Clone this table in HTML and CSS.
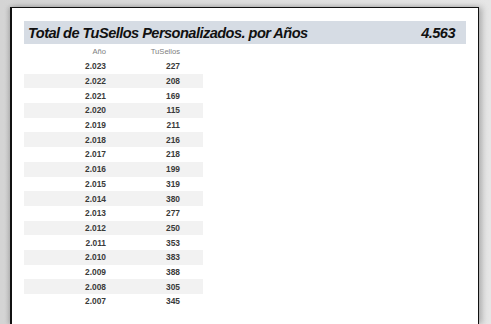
FILE: index.html
```html
<!DOCTYPE html>
<html lang="es">
<head>
    <meta charset="UTF-8">
    <title>TuSellos Personalizados por Años</title>
    <link rel="stylesheet" href="styles.css">
</head>
<body>
    <div class="hoja">
        <div class="titulo">
            <span>Total de TuSellos Personalizados. por Años</span>
            <span>4.563</span>
        </div>

        <div class="tabla">
            <div class="fila cabecera"><span>Año</span><span>TuSellos</span></div>
            <div class="fila"><span>2.023</span><span>227</span></div>
            <div class="fila"><span>2.022</span><span>208</span></div>
            <div class="fila"><span>2.021</span><span>169</span></div>
            <div class="fila"><span>2.020</span><span>115</span></div>
            <div class="fila"><span>2.019</span><span>211</span></div>
            <div class="fila"><span>2.018</span><span>216</span></div>
            <div class="fila"><span>2.017</span><span>218</span></div>
            <div class="fila"><span>2.016</span><span>199</span></div>
            <div class="fila"><span>2.015</span><span>319</span></div>
            <div class="fila"><span>2.014</span><span>380</span></div>
            <div class="fila"><span>2.013</span><span>277</span></div>
            <div class="fila"><span>2.012</span><span>250</span></div>
            <div class="fila"><span>2.011</span><span>353</span></div>
            <div class="fila"><span>2.010</span><span>383</span></div>
            <div class="fila"><span>2.009</span><span>388</span></div>
            <div class="fila"><span>2.008</span><span>305</span></div>
            <div class="fila"><span>2.007</span><span>345</span></div>
        </div>
    </div>
</body>
</html>
```

FILE: styles.css
```css
* { margin: 0; padding: 0; box-sizing: border-box; }

html, body {
    height: 100%;
    overflow: hidden;
}

body {
    font-family: 'Liberation Sans', Arial, sans-serif;
    background: linear-gradient(90deg, #d4d4d4 0%, #dedede 50%, #e6e6e6 100%);
    padding: 7px 0 0 10px;
}

/* hoja de impresión, sigue por debajo del borde */
.hoja {
    width: 469px;
    height: 100%;
    background: #fff;
    border: 1px solid #111;
    border-left-width: 2px;
    border-bottom: none;
    box-shadow: 3px 0 6px rgba(0,0,0,0.25), -2px 0 4px rgba(0,0,0,0.15);
    padding: 13px 0 0 12px;
}

.titulo {
    width: 442px;
    height: 23px;
    background: #d6dce4;
    display: flex;
    justify-content: space-between;
    align-items: center;
    padding: 1px 11px 0 4px;
    font-size: 14.6px;
    font-weight: bold;
    font-style: italic;
    color: #111;
    letter-spacing: -0.55px;
}

.tabla {
    width: 179px;
}

.fila {
    display: grid;
    grid-template-columns: 82px 74px 1fr;
    height: 14.7px;
    align-items: center;
    font-size: 8.4px;
    font-weight: bold;
    color: #3a3a3a;
}

.fila span {
    text-align: right;
}

.fila:nth-child(odd) {
    background: #f2f2f2;
}

.fila.cabecera {
    height: 15px;
    background: none;
    font-weight: normal;
    font-size: 7.6px;
    color: #808080;
}
```
